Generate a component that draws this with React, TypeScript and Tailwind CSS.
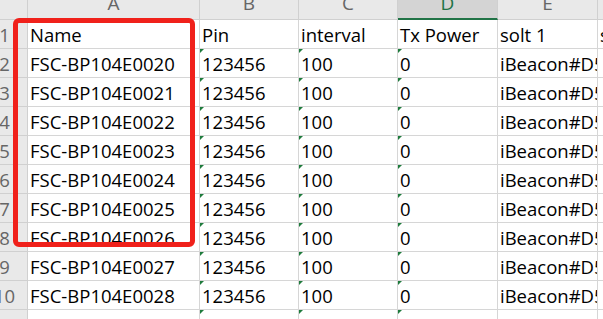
const columns = ["A", "B", "C", "D", "E", "F"];

const header = ["Name", "Pin", "interval", "Tx Power", "solt 1", "solt 2"];

const rows = Array.from({ length: 11 }, (_, i) => ({
  name: `FSC-BP104E00${20 + i}`,
  pin: "123456",
  interval: "100",
  tx: "0",
  slot: "iBeacon#D546DF97-4757-47EF-BE09-3E2DCBDD0C77",
}));

const widths = ["w-[46px]", "w-[172px]", "w-[99px]", "w-[99px]", "w-[100px]", "w-[100px]", "w-[100px]"];

function Flag() {
  return (
    <span className="absolute left-0 top-0 w-0 h-0 border-t-[4px] border-r-[4px] border-t-[#1e7b3c] border-r-transparent" />
  );
}

function Cell({ w, children, flag }: { w: string; children?: React.ReactNode; flag?: boolean }) {
  return (
    <div
      className={`relative ${w} shrink-0 h-[29px] border-r border-b border-[#d6d6d6] pl-[2px] leading-[30px] whitespace-nowrap overflow-hidden text-black`}
    >
      {flag && <Flag />}
      {children}
    </div>
  );
}

function RowHead({ n }: { n: number }) {
  return (
    <div className="w-[46px] shrink-0 h-[29px] border-r border-b border-[#d0d0d0] bg-[#e9e9e9] text-center leading-[30px] text-[#666]">
      {n}
    </div>
  );
}

export default function App() {
  return (
    <div className="relative w-[603px] h-[319px] overflow-hidden bg-white font-['Open_Sans',sans-serif] text-[18.5px]">
      <div className="-ml-[18px] flex flex-col w-max">
        {/* column letters */}
        <div className="flex h-[20px]">
          <div className="w-[46px] shrink-0 h-[20px] bg-[#e9e9e9] border-r border-b border-[#d0d0d0]" />
          {columns.map((c, i) => (
            <div
              key={c}
              className={`${widths[i + 1]} shrink-0 h-[20px] overflow-hidden text-center text-[19px] leading-[20px] border-r ${
                c === "D"
                  ? "bg-[#d4d4d4] text-[#217346] border-b-2 border-b-[#217346] border-r-[#d0d0d0]"
                  : "bg-[#e9e9e9] text-[#666] border-b border-[#d0d0d0]"
              }`}
            >
              <span className="block -mt-[7px]">{c}</span>
            </div>
          ))}
        </div>

        {/* header row */}
        <div className="flex">
          <RowHead n={1} />
          {header.map((h, i) => (
            <Cell key={h} w={widths[i + 1]}>
              {h}
            </Cell>
          ))}
        </div>

        {rows.map((r, i) => (
          <div key={r.name} className="flex">
            <RowHead n={i + 2} />
            <Cell w={widths[1]}>{r.name}</Cell>
            <Cell w={widths[2]} flag>
              {r.pin}
            </Cell>
            <Cell w={widths[3]} flag>
              {r.interval}
            </Cell>
            <Cell w={widths[4]} flag>
              {r.tx}
            </Cell>
            <Cell w={widths[5]}>{r.slot}</Cell>
            <Cell w={widths[6]} />
          </div>
        ))}
      </div>

      {/* red highlight around the Name column */}
      <div className="absolute left-[13px] top-[18px] w-[182px] h-[229px] border-[5px] border-[#f0211b] rounded-[6px]" />
    </div>
  );
}
